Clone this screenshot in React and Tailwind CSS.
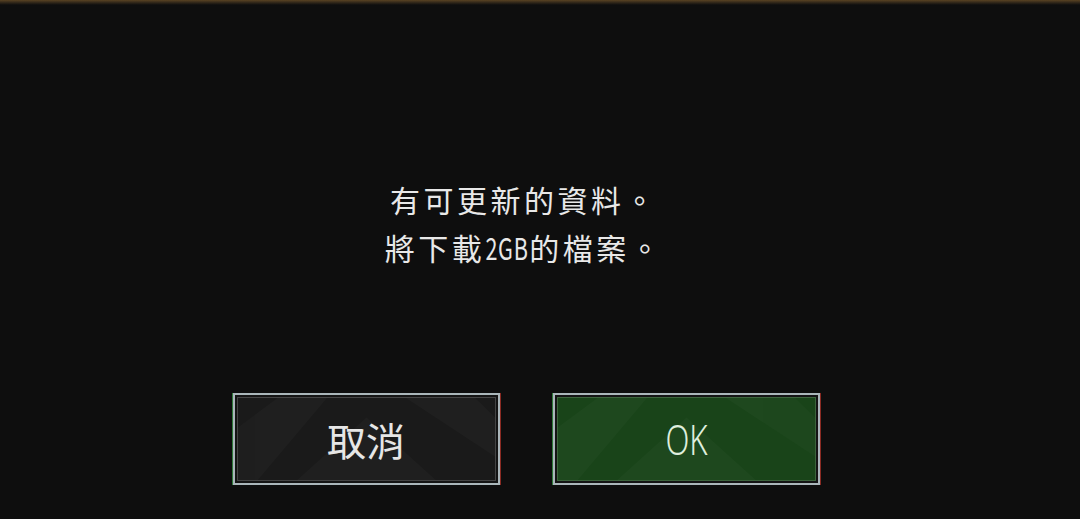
import React from 'react';

function Diamonds() {
  // faint diagonal pattern drawn inside the button faces
  return (
    <svg className="absolute inset-0 h-full w-full" viewBox="0 0 260 84" preserveAspectRatio="none">
      <g fill="#ffffff" opacity="0.018">
        <polygon points="0,30 40,0 90,0 20,84 0,84" />
        <polygon points="60,84 130,20 200,84" />
        <polygon points="170,0 240,0 260,20 260,60" />
      </g>
    </svg>
  );
}

function Narrow({ children, w, s }) {
  return (
    <span className={'inline-flex justify-center overflow-visible whitespace-nowrap ' + w}>
      <span className={'inline-block ' + s}>{children}</span>
    </span>
  );
}

function GameButton({ green, children }) {
  return (
    <button className="relative w-[267px] h-[92px] p-[2px] bg-[#aab6ba] shadow-[-1px_0_0_#2f7a3a,1px_0_0_#8a2a22]">
      <div className="h-full w-full p-[2px] bg-[#141414]">
        <div
          className={
            'relative h-full w-full overflow-hidden border ' +
            (green ? 'border-[#3c633c] bg-[#194419]' : 'border-[#444444] bg-[#1a1a1a]')
          }
        >
          <Diamonds />
          <span className="relative flex h-full items-center justify-center text-[#e6e6e6]">
            {children}
          </span>
        </div>
      </div>
    </button>
  );
}

export default function App() {
  return (
    <div className="relative h-[519px] w-[1080px] overflow-hidden bg-[#0e0e0e] font-['Noto_Sans_CJK_TC','Noto_Sans',sans-serif]">
      <div className="absolute left-0 right-0 top-0 h-[5px] bg-gradient-to-b from-[#5a4322] to-[#0e0e0e]" />
      <div className="flex flex-col items-center pt-[175px] pr-[28px]">
        <div className="text-center text-[30px] leading-[48px] tracking-[3.5px] text-[#e8e8e8] pr-[4px]">
          <p>有可更新的資料。</p>
          <p>
            將下載<Narrow w="w-[44px]" s="scale-x-[0.72] tracking-[1px]">2GB</Narrow>的檔案。
          </p>
        </div>
        <div className="mt-[122px] flex gap-[53px]">
          <GameButton>
            <span className="text-[39px] leading-none">取消</span>
          </GameButton>
          <GameButton green>
            <span className="inline-block text-[42px] leading-none scale-x-[0.74] font-light text-[#dfeedd] font-['Noto_Sans',sans-serif]">OK</span>
          </GameButton>
        </div>
      </div>
    </div>
  );
}
